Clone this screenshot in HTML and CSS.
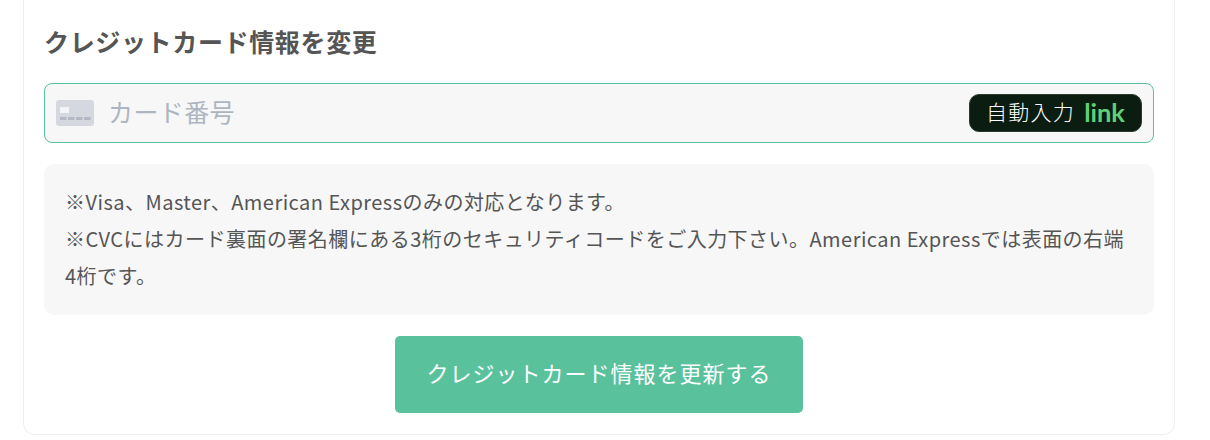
FILE: index.html
```html
<!DOCTYPE html>
<html lang="ja">
<head>
<meta charset="utf-8">
<title>クレジットカード情報を変更</title>
<link rel="stylesheet" href="styles.css">
</head>
<body>
<section class="card">
  <h2 class="title">クレジットカード情報を変更</h2>
  <div class="field">
    <svg class="card-icon" width="38" height="26" viewBox="0 0 38 26" aria-hidden="true">
      <rect width="38" height="26" rx="3" fill="#d6d8e0"/>
      <rect x="4" y="7" width="9" height="6" fill="#f4f4f6"/>
      <rect x="4" y="17" width="6.5" height="3" fill="#b4b7c4"/>
      <rect x="12" y="17" width="6.5" height="3" fill="#b4b7c4"/>
      <rect x="20" y="17" width="6.5" height="3" fill="#b4b7c4"/>
      <rect x="28" y="17" width="6.5" height="3" fill="#b4b7c4"/>
    </svg>
    <span class="placeholder">カード番号</span>
    <span class="autofill"><span class="autofill-text">自動入力</span><span class="link">link</span></span>
  </div>
  <div class="note">
    <p>※Visa、Master、American Expressのみの対応となります。</p>
    <p>※CVCにはカード裏面の署名欄にある3桁のセキュリティコードをご入力下さい。American Expressでは表面の右端4桁です。</p>
  </div>
  <div class="actions">
    <button class="submit" type="button">クレジットカード情報を更新する</button>
  </div>
</section>
</body>
</html>
```

FILE: styles.css
```css
* { box-sizing: border-box; }
body {
  margin: 0;
  height: 440px;
  overflow: hidden;
  background: #fff;
  font-family: "Noto Sans CJK JP", "Noto Sans", sans-serif;
  color: #555;
  padding: 0 35px 5px 23px;
  display: flex;
  flex-direction: column;
  justify-content: flex-end;
}
.card {
  flex: none;
  background: #fff;
  border: 1px solid #eeeeee;
  border-top: 0;
  border-radius: 0 0 12px 12px;
  padding: 23px 20px 21px;
  height: 435px;
  display: flex;
  flex-direction: column;
  justify-content: flex-end;
}
.title {
  margin: 0 0 24px 0;
  font-size: 25px;
  line-height: 36px;
  font-weight: 700;
  letter-spacing: .65px;
  color: #555;
}
.field {
  height: 61px;
  display: flex;
  align-items: center;
  background: #f7f7f7;
  border: 1px solid #58c19d;
  border-radius: 8px;
  padding: 0 11px;
}
.card-icon { flex: none; }
.placeholder {
  margin-left: 14px;
  padding-bottom: 4px;
  font-size: 25px;
  letter-spacing: .4px;
  color: #adb5c1;
  flex: 1;
}
.autofill {
  display: flex;
  align-items: center;
  gap: 9px;
  height: 38px;
  padding: 0 16px 0 15.5px;
  background: #0b1c10;
  border: 1px solid #2c3b30;
  border-radius: 10px;
  color: #fff;
  font-size: 21px;
  letter-spacing: 1.3px;
}
.autofill-text { padding-bottom: 4px; font-weight: 300; }
.link {
  color: #5fcf78;
  font-family: "Lato", sans-serif;
  font-weight: 700;
  font-size: 25.5px;
  letter-spacing: 0;
  padding-bottom: 3px;
}
.note {
  margin-top: 21px;
  padding: 19px 24px 21px 21px;
  background: #f7f7f7;
  border-radius: 10px;
  font-size: 20px;
  line-height: 37px;
  letter-spacing: .47px;
  color: #555;
}
.note p { margin: 0; }
.actions {
  display: flex;
  justify-content: center;
  margin-top: 21px;
}
.submit {
  width: 408px;
  height: 77px;
  border: 0;
  border-radius: 5px;
  background: #5ac19d;
  color: #fff;
  font-family: inherit;
  font-size: 22px;
  letter-spacing: 1px;
  padding: 0 0 5px;
}
```
